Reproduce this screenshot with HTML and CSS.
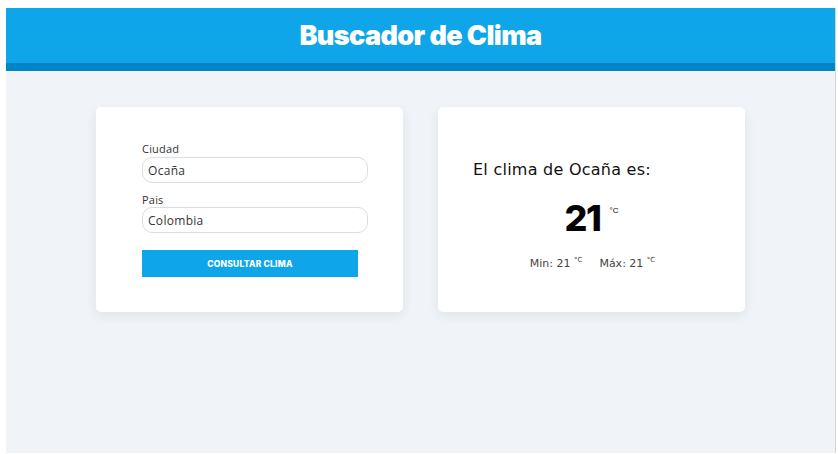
FILE: index.html
```html
<!DOCTYPE html>
<html lang="es">
<head>
<meta charset="utf-8">
<title>Buscador de Clima</title>
<link rel="stylesheet" href="styles.css">
</head>
<body>
<div class="page">
  <header class="header">
    <h1 class="title">Buscador de Clima</h1>
  </header>
  <main class="main">
    <section class="card form-card">
      <form class="form">
        <label class="label" for="ciudad">Ciudad</label>
        <input class="input" id="ciudad" type="text" value="Ocaña">
        <label class="label label-second" for="pais">Pais</label>
        <input class="input" id="pais" type="text" value="Colombia">
        <button class="button" type="button">Consultar clima</button>
      </form>
    </section>
    <section class="card result-card">
      <p class="result-title">El clima de Ocaña es:</p>
      <div class="temp">
        <span class="temp-value">21</span><span class="temp-unit">°C</span>
      </div>
      <div class="range">
        <span class="range-item">Min: 21 <sup class="range-unit">°C</sup></span>
        <span class="range-item">Máx: 21 <sup class="range-unit">°C</sup></span>
      </div>
    </section>
  </main>
</div>
</body>
</html>
```

FILE: styles.css
```css
html, body {
  margin: 0;
  padding: 0;
  background: #ffffff;
}

.page {
  margin: 8px 0 0 6px;
  width: 829px;
  height: 445px;
  background: #f0f4f8;
  border-right: 1px solid #d4d4d4;
  box-sizing: content-box;
}

.header {
  height: 55px;
  background: #0ea5e9;
  border-bottom: 8px solid #0284c7;
  display: flex;
  align-items: center;
  justify-content: center;
}

.title {
  margin: 0;
  font-family: Inter, "Liberation Sans", sans-serif;
  font-weight: 900;
  font-size: 27px;
  letter-spacing: -0.6px;
  color: #ffffff;
  line-height: 1;
}

.main {
  display: flex;
  justify-content: center;
  gap: 35px;
  padding-top: 36px;
}

.card {
  width: 307px;
  height: 205px;
  background: #ffffff;
  border-radius: 5px;
  box-shadow: 0 4px 12px rgba(30, 41, 59, 0.08);
  box-sizing: border-box;
}

.form-card {
  padding: 35px 35px 0 46px;
}

.form {
  display: flex;
  flex-direction: column;
  align-items: flex-start;
}

.label {
  font-family: "Open Sans", sans-serif;
  font-size: 11px;
  line-height: 13px;
  color: #333333;
  letter-spacing: 0.2px;
  margin-bottom: 2px;
}

.label-second {
  margin-top: 10px;
  margin-bottom: 1px;
}

.input {
  width: 226px;
  height: 26px;
  box-sizing: border-box;
  border: 1px solid #d8dde6;
  border-radius: 10px;
  padding: 0 5px;
  font-family: "Open Sans", sans-serif;
  font-size: 12px;
  letter-spacing: 0.3px;
  color: #333333;
  background: #ffffff;
  outline: none;
}

.button {
  margin-top: 17px;
  width: 216px;
  height: 27px;
  border: none;
  background: #0ea5e9;
  color: #ffffff;
  font-family: Inter, "Liberation Sans", sans-serif;
  font-weight: 800;
  font-size: 8.5px;
  text-transform: uppercase;
  letter-spacing: 0.2px;
  padding: 0;
}

.result-card {
  padding: 53px 35px 0 35px;
  display: flex;
  flex-direction: column;
}

.result-title {
  margin: 0;
  font-family: "DejaVu Sans", sans-serif;
  font-size: 16px;
  letter-spacing: 0.25px;
  line-height: 20px;
  color: #111111;
}

.temp {
  display: flex;
  justify-content: center;
  align-items: flex-start;
  margin-top: 20px;
}

.temp-value {
  font-family: Inter, "Liberation Sans", sans-serif;
  font-weight: 800;
  font-size: 36px;
  line-height: 37px;
  letter-spacing: -1.5px;
  color: #000000;
}

.temp-unit {
  font-family: "Liberation Sans", Arial, sans-serif;
  font-size: 8px;
  margin-left: 9px;
  margin-top: 6px;
  color: #000000;
}

.range {
  display: flex;
  justify-content: center;
  gap: 17px;
  margin-top: 20px;
  padding-left: 2px;
}

.range-item {
  font-family: "DejaVu Sans", sans-serif;
  font-size: 11px;
  line-height: 14px;
  color: #444444;
}

.range-unit {
  font-size: 7px;
  vertical-align: 5px;
  line-height: 0;
}
```
